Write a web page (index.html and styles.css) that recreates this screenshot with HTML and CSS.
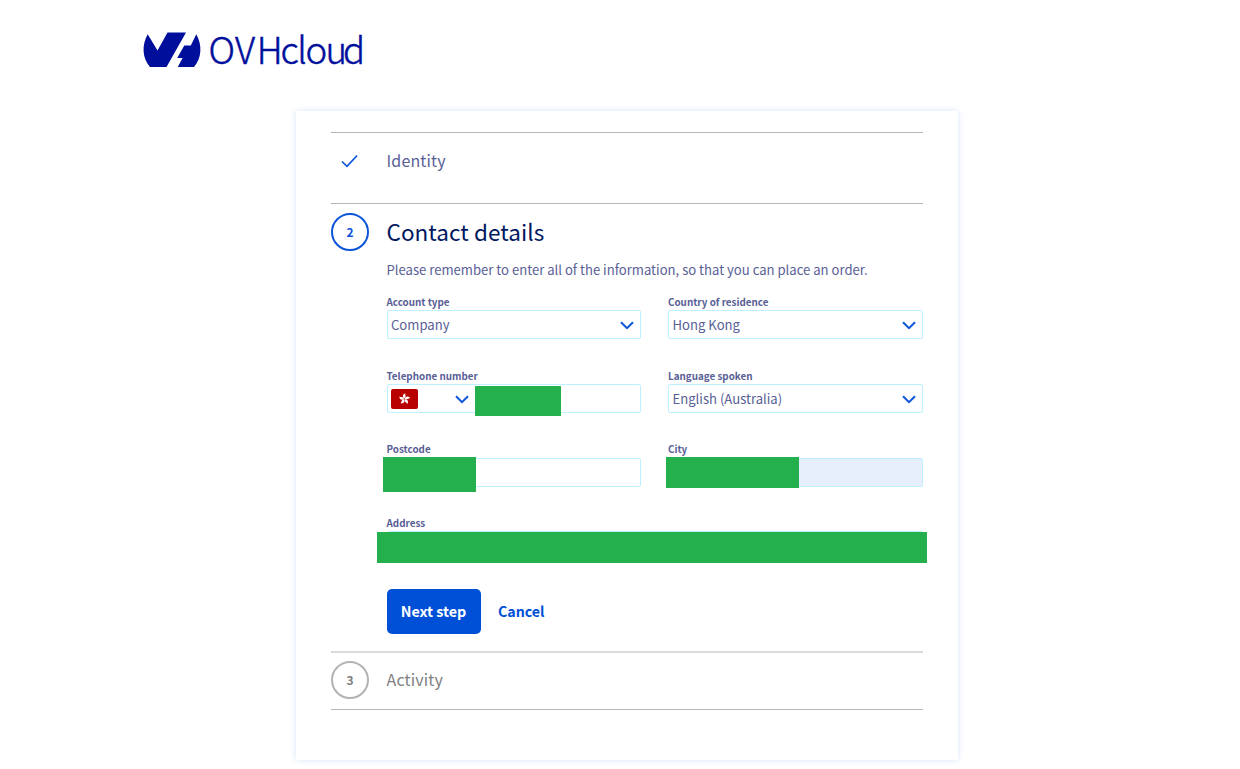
FILE: index.html
```
<!DOCTYPE html>
<html lang="en">
<head>
<meta charset="utf-8">
<title>OVHcloud – Contact details</title>
<link rel="stylesheet" href="styles.css">
</head>
<body>
<header class="header">
  <svg class="logo" width="224" height="40" viewBox="0 0 224 40" role="img" aria-label="OVHcloud">
    <path fill="#000e9c" d="M4.700 4.300 14.500 20.500 24.500 2.600H43L23.500 37H7C-.7 28.500-1.500 15 4.700 4.300ZM53.300 4.300C59.500 15 58.700 28.500 51 37H34.800L39.600 28H34.200L41.300 15.500H47.800Z"/>
    <text class="logo-text" x="65.500 92 113.800 137.600 154.300 162.500 182.400 200" y="34">OVHcloud</text>
  </svg>
</header>
<main class="card">
  <section class="step step-done">
    <div class="marker"><svg width="18" height="14" viewBox="0 0 18 14"><path d="M1 7.500 6 12.300 16.100 1.500" fill="none" stroke="#0d55d9" stroke-width="1.700"/></svg></div>
    <h2 class="step-title">Identity</h2>
  </section>
  <section class="step step-active">
    <div class="marker circle">2</div>
    <div class="body">
      <h2 class="active-title">Contact details</h2>
      <p class="intro">Please remember to enter all of the information, so that you can place an order.</p>
      <form class="grid">
        <div class="field"><label class="label">Account type</label>
          <div class="control"><span class="value">Company</span><svg class="chevron" viewBox="0 0 14 9"><path d="M1 1.200 7 7.200 13 1.200"/></svg></div></div>
        <div class="field"><label class="label">Country of residence</label>
          <div class="control"><span class="value">Hong Kong</span><svg class="chevron" viewBox="0 0 14 9"><path d="M1 1.200 7 7.200 13 1.200"/></svg></div></div>
        <div class="field"><label class="label">Telephone number</label>
          <div class="control phone">
            <div class="prefix">
              <svg class="flag" width="27" height="20" viewBox="0 0 27 20"><rect width="27" height="20" rx="2" fill="#b80000"/><g fill="#fff" transform="translate(13.500 10)"><path id="petal" d="M0-.4C-2.500-1.800-2-4.800.8-5.700C.2-4.300 2.300-3 0-.4Z"/><use href="#petal" transform="rotate(72)"/><use href="#petal" transform="rotate(144)"/><use href="#petal" transform="rotate(216)"/><use href="#petal" transform="rotate(288)"/></g></svg>
              <svg class="chevron" viewBox="0 0 14 9"><path d="M1 1.200 7 7.200 13 1.200"/></svg>
            </div>
            <span class="mask mask-phone"></span>
          </div></div>
        <div class="field"><label class="label">Language spoken</label>
          <div class="control"><span class="value">English (Australia)</span><svg class="chevron" viewBox="0 0 14 9"><path d="M1 1.200 7 7.200 13 1.200"/></svg></div></div>
        <div class="field"><label class="label">Postcode</label>
          <div class="control"><span class="mask mask-postcode"></span></div></div>
        <div class="field"><label class="label">City</label>
          <div class="control filled"><span class="mask mask-city"></span></div></div>
        <div class="field wide"><label class="label">Address</label>
          <div class="control"><span class="mask mask-address"></span></div></div>
      </form>
      <div class="actions"><button class="next">Next step</button><a class="cancel">Cancel</a></div>
    </div>
  </section>
  <section class="step step-pending">
    <div class="marker circle">3</div>
    <h2 class="step-title">Activity</h2>
  </section>
</main>
</body>
</html>
```
FILE: styles.css
```
* { box-sizing: border-box; }
body { margin: 0; height: 769px; overflow: hidden; background: #fff; color: #596096; font-family: "Noto Sans CJK JP", "Open Sans", sans-serif; }
h2, p { margin: 0; font-weight: 400; }
.header { height: 111px; padding: 30px 0 0 143px; }
.logo { display: block; overflow: visible; }
.logo-text { font-family: "Noto Sans CJK JP", sans-serif; font-weight: 300; font-size: 36.500px; fill: #000e9c; stroke: #000e9c; stroke-width: .5px; }
.card { width: 662px; height: 649px; margin-left: 296px; padding: 21px 35px 0; background: #fff; box-shadow: 0 0 6px rgba(0, 80, 215, .16); }
.step { display: flex; gap: 17.500px; border-top: 1px solid #b5b5b5; }
.marker { flex: 0 0 38px; height: 38px; display: flex; align-items: center; justify-content: center; }
.circle { border: 2px solid #0d55d9; border-radius: 50%; color: #0d55d9; font-size: 12px; font-weight: 700; line-height: 14px; }
.step-done { height: 71px; padding-top: 9px; }
.step-title { font-size: 16px; line-height: 36px; letter-spacing: .15px; }
.step-active { height: 448px; padding-top: 9px; }
.body { width: 536.500px; }
.active-title { font-size: 22.500px; line-height: 36px; letter-spacing: .05px; color: #00185e; }
.intro { margin-top: 9px; font-size: 13.100px; line-height: 24px; white-space: nowrap; }
.grid { display: grid; grid-template-columns: 254.500px 255px; column-gap: 27px; row-gap: 29.300px; margin-top: 13px; }
.field { min-width: 0; }
.wide { grid-column: 1 / 3; }
.label { display: block; height: 15.400px; font-size: 9.850px; font-weight: 700; line-height: 15.400px; white-space: nowrap; }
.control { position: relative; display: flex; align-items: center; justify-content: space-between; height: 29px; padding: 0 6px 0 4px; border: 1px solid #bef1ff; border-radius: 2px; }
.value { margin-left: -.5px; padding-top: 1px; font-size: 13.100px; line-height: 26px; white-space: nowrap; }
.chevron { flex: none; width: 14px; height: 9px; margin-top: 2px; fill: none; stroke: #0d55d9; stroke-width: 2; }
.prefix { display: flex; align-items: center; justify-content: space-between; width: 78px; }
.phone { padding-left: 3px; }
.filled { background: #e8effc; }
.mask { position: absolute; background: #24b14d; }
.mask-phone { left: 87.500px; top: .8px; width: 86px; height: 30px; }
.mask-postcode { left: -4.500px; top: -1.900px; width: 93px; height: 35px; }
.mask-city { left: -3px; top: -1.900px; width: 133px; height: 31px; }
.mask-address { left: -10.500px; top: -.5px; width: 550px; height: 31px; }
.actions { display: flex; align-items: center; gap: 17.500px; margin-top: 28.400px; }
.next { width: 94px; height: 45px; padding: 0 0 1px; border: 0; border-radius: 5px; background: #0050d7; color: #fff; font: 700 14.300px/20px "Noto Sans CJK JP", sans-serif; white-space: nowrap; }
.cancel { padding-bottom: 1px; color: #0050d7; font-size: 14.200px; font-weight: 700; line-height: 20px; }
.step-pending { height: 59px; padding-top: 8px; border-top: 2px solid #dadada; border-bottom: 1px solid #b5b5b5; color: #808080; }
.step-pending .step-title { line-height: 37px; }
.step-pending .circle { border-color: #b3b3b3; color: #808080; }
```
